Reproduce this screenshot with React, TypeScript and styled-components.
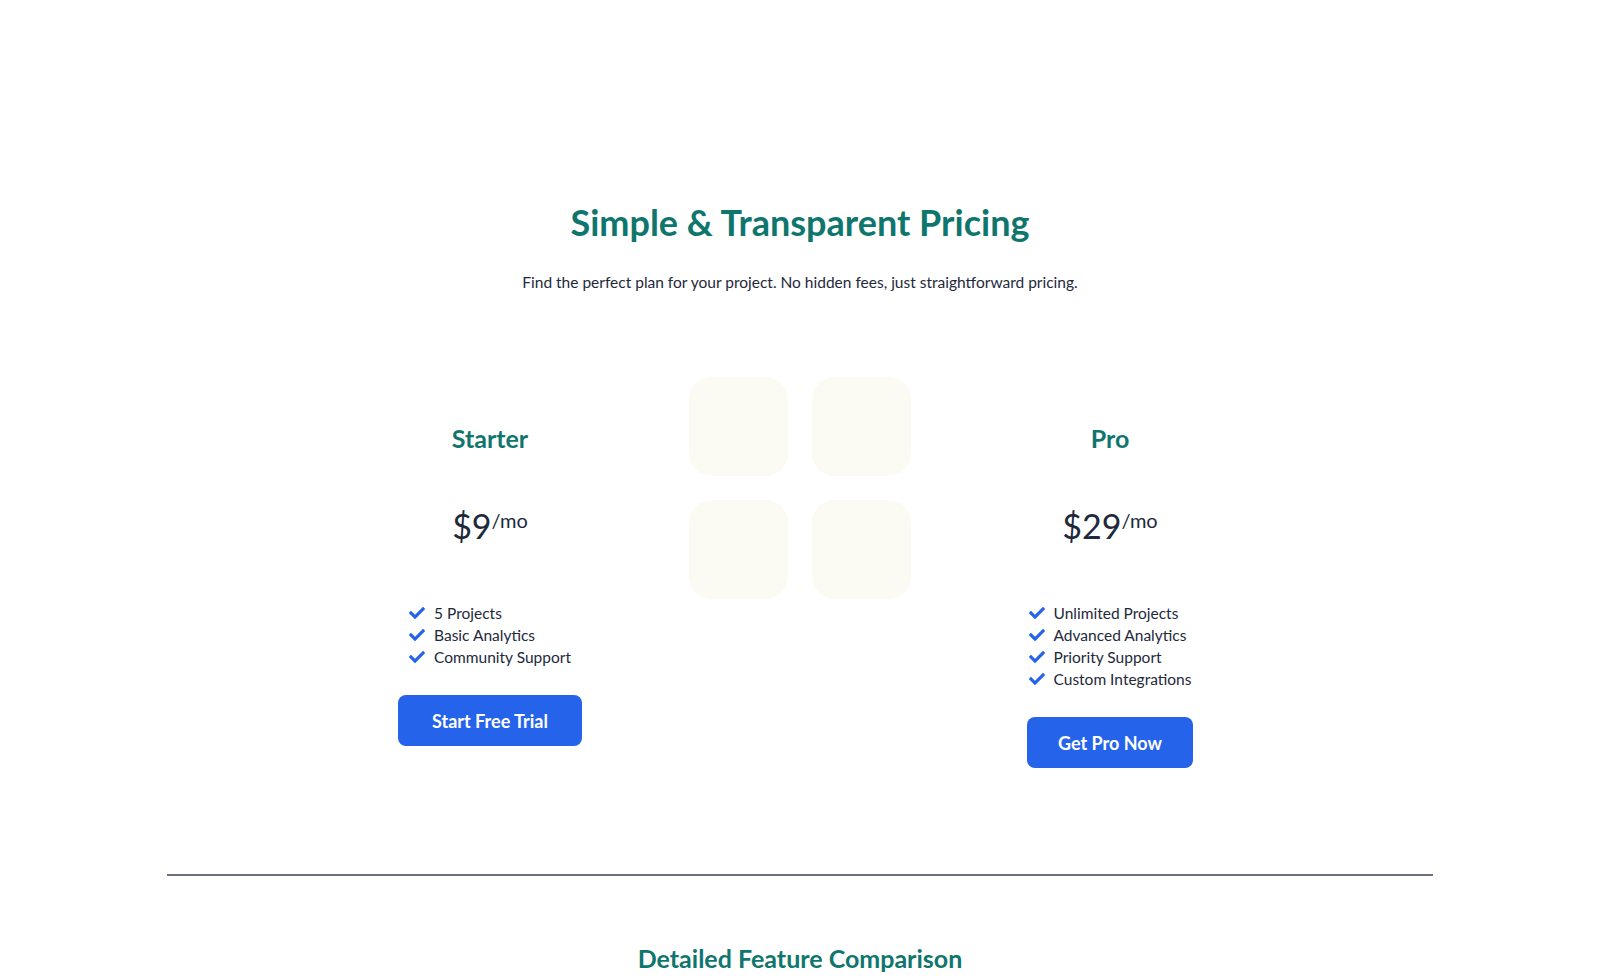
import React from 'react'
import styled, { createGlobalStyle } from 'styled-components'
import { FaCheck } from 'react-icons/fa'

const GlobalStyle = createGlobalStyle`
  html, body {
    margin: 0;
    padding: 0;
    background: #ffffff;
  }
  body {
    font-family: 'Lato', 'Noto Sans', sans-serif;
    color: #1e293b;
  }
  * {
    box-sizing: border-box;
  }
`

const Page = styled.main`
  display: flex;
  flex-direction: column;
  align-items: center;
  padding-top: 200px;
`
const Title = styled.h1`
  margin: 0 0 26px;
  font-size: 36px;
  line-height: 44px;
  font-weight: 700;
  color: #0f766e;
  text-align: center;
`
const Subtitle = styled.p`
  margin: 0;
  font-size: 15.5px;
  line-height: 24px;
  color: #1e293b;
  text-align: center;
`
const Plans = styled.section`
  display: flex;
  justify-content: center;
  align-items: flex-start;
  gap: 32px;
  margin-top: 83px;
`
const Card = styled.div`
  width: 278px;
  display: flex;
  flex-direction: column;
  align-items: center;
  padding-top: 43px;
`
const Decor = styled.div`
  width: 278px;
  display: flex;
  justify-content: center;
`
const PlanName = styled.h2`
  margin: 0;
  font-size: 25px;
  line-height: 36px;
  font-weight: 700;
  color: #0f766e;
`
const Price = styled.div`
  margin-top: 50px;
  font-size: 34px;
  line-height: 40px;
  color: #1e293b;
  sup {
    font-size: 20px;
    vertical-align: top;
    position: relative;
    top: -6px;
  }
`
const Features = styled.ul`
  list-style: none;
  margin: 56px 0 0;
  padding: 0;
`
const Feature = styled.li`
  display: flex;
  align-items: center;
  gap: 9px;
  font-size: 15.5px;
  line-height: 22px;
  color: #1e293b;
  svg {
    color: #2563eb;
    flex-shrink: 0;
  }
`
const Button = styled.button<{ $pad?: number }>`
  margin-top: 27px;
  height: 51px;
  padding: 0 ${(props) => props.$pad ?? 34}px;
  border: none;
  border-radius: 8px;
  background: #2563eb;
  color: #ffffff;
  font-family: inherit;
  font-size: 18px;
  font-weight: 700;
  cursor: pointer;
`
const Divider = styled.hr`
  width: 1266px;
  margin: 106px 0 0;
  border: none;
  border-top: 2px solid #6b6f82;
`
const SectionTitle = styled.h2`
  margin: 66px 0 0;
  font-size: 25px;
  line-height: 32px;
  font-weight: 700;
  color: #0f766e;
`

const GridMark = () => (
  <svg width='222' height='222' viewBox='0 0 222 222' aria-hidden='true'>
    <g fill='#fcfbf3'>
      <rect x='0' y='0' width='99' height='99' rx='22' />
      <rect x='123' y='0' width='99' height='99' rx='22' />
      <rect x='0' y='123' width='99' height='99' rx='22' />
      <rect x='123' y='123' width='99' height='99' rx='22' />
    </g>
  </svg>
)

type Plan = {
  name: string
  price: string
  features: string[]
  cta: string
  pad: number
}

const plans: Plan[] = [
  {
    name: 'Starter',
    price: '$9',
    features: ['5 Projects', 'Basic Analytics', 'Community Support'],
    cta: 'Start Free Trial',
    pad: 34
  },
  {
    name: 'Pro',
    price: '$29',
    features: ['Unlimited Projects', 'Advanced Analytics', 'Priority Support', 'Custom Integrations'],
    cta: 'Get Pro Now',
    pad: 31
  }
]

const PlanCard = ({ plan }: { plan: Plan }) => (
  <Card>
    <PlanName>{plan.name}</PlanName>
    <Price>
      {plan.price}
      <sup>/mo</sup>
    </Price>
    <Features>
      {plan.features.map((f) => (
        <Feature key={f}>
          <FaCheck size={16} />
          {f}
        </Feature>
      ))}
    </Features>
    <Button type='button' $pad={plan.pad}>
      {plan.cta}
    </Button>
  </Card>
)

const App = () => (
  <>
    <GlobalStyle />
    <Page>
      <Title>Simple &amp; Transparent Pricing</Title>
      <Subtitle>Find the perfect plan for your project. No hidden fees, just straightforward pricing.</Subtitle>
      <Plans>
        <PlanCard plan={plans[0]} />
        <Decor>
          <GridMark />
        </Decor>
        <PlanCard plan={plans[1]} />
      </Plans>
      <Divider />
      <SectionTitle>Detailed Feature Comparison</SectionTitle>
    </Page>
  </>
)

export default App
